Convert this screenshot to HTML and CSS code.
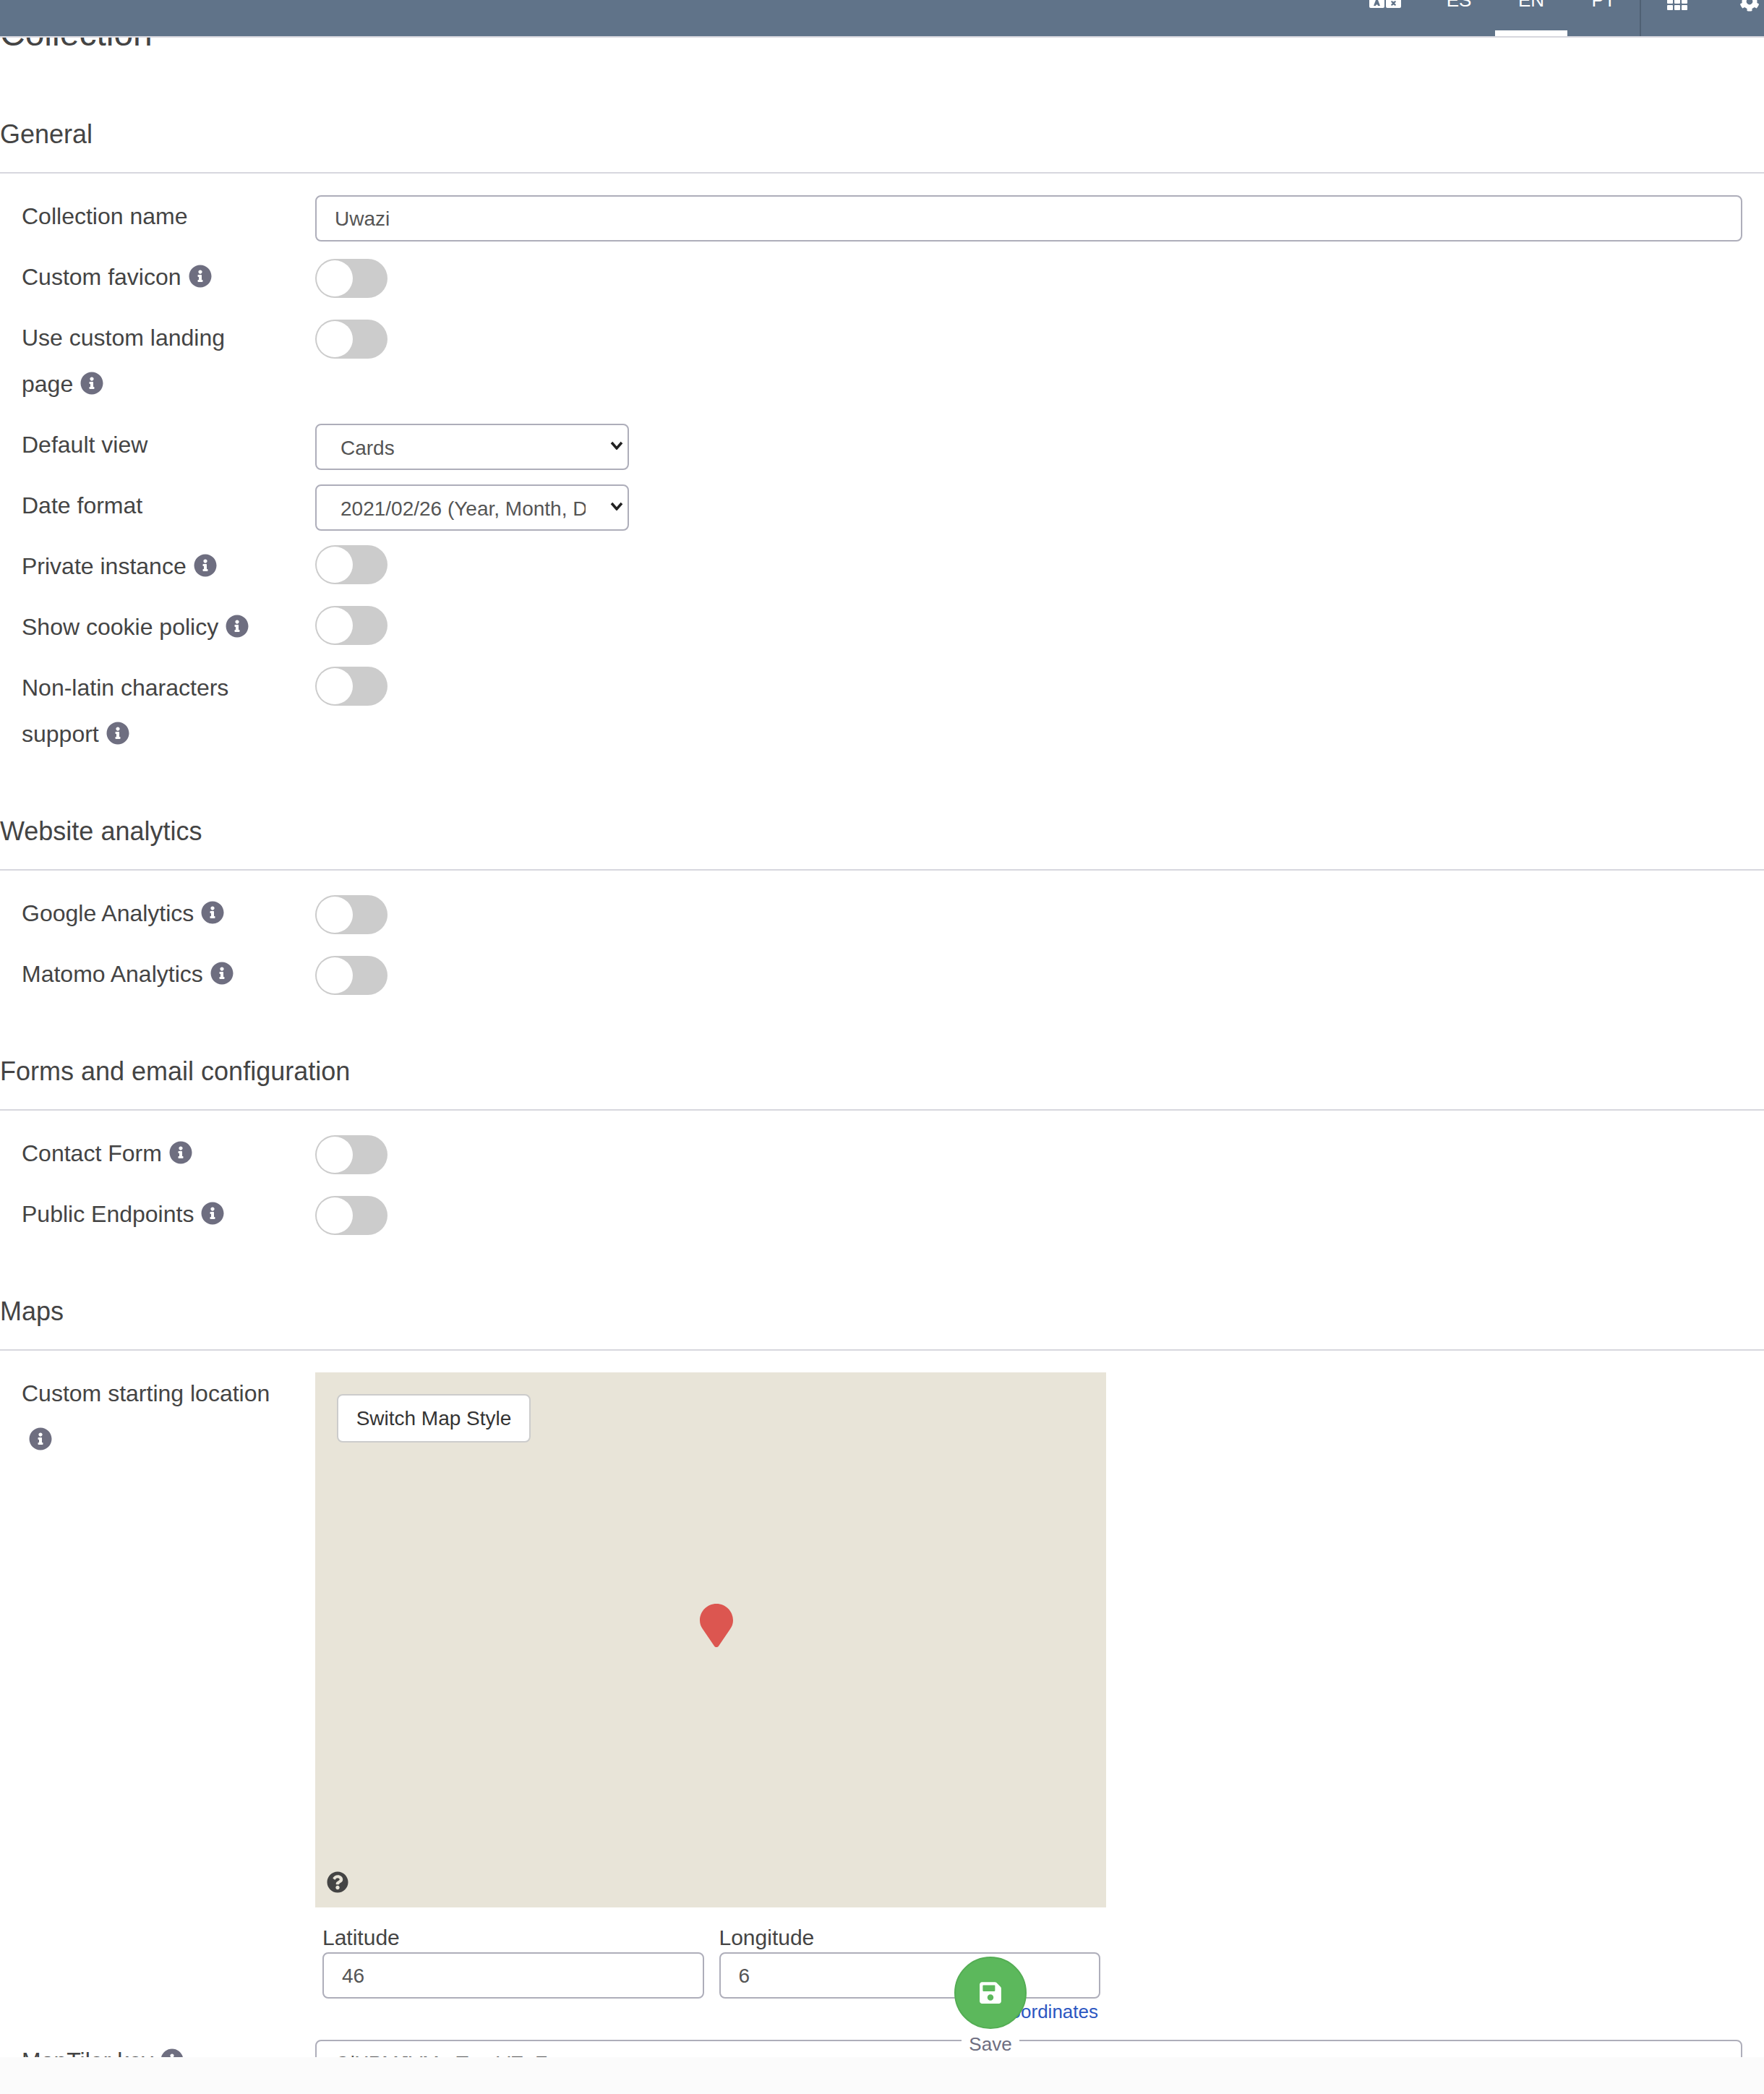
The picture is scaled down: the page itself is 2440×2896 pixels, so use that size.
FILE: index.html
```html
<!DOCTYPE html>
<html>
<head>
    <title>Collection settings</title>
    <link rel="stylesheet" href="styles.css">
</head>
<body>
    <svg class="icon-defs">
        <symbol id="info" viewBox="0 0 512 512"><path d="M256 8C119.043 8 8 119.083 8 256c0 136.997 111.043 248 248 248s248-111.003 248-248C504 119.083 392.957 8 256 8zm0 110c23.196 0 42 18.804 42 42s-18.804 42-42 42-42-18.804-42-42 18.804-42 42-42zm56 254c0 6.627-5.373 12-12 12h-88c-6.627 0-12-5.373-12-12v-24c0-6.627 5.373-12 12-12h12v-64h-12c-6.627 0-12-5.373-12-12v-24c0-6.627 5.373-12 12-12h64c6.627 0 12 5.373 12 12v100h12c6.627 0 12 5.373 12 12v24z"/></symbol>
        <symbol id="chevron" viewBox="0 0 18 12"><path d="M2 2l7 8 7-8" fill="none" stroke="#222" stroke-width="3.500"/></symbol>
    </svg>

    <nav class="navbar">
        <svg class="nav-language" viewBox="0 0 44 11">
            <path fill-rule="evenodd" d="M0 -10h21v19a2 2 0 0 1-2 2H2a2 2 0 0 1-2-2zM9 0h3l3 8h-3l-.5-1.500h-2L9 8H6z"/>
            <path fill-rule="evenodd" d="M23 -10h21v19a2 2 0 0 1-2 2H25a2 2 0 0 1-2-2zM31 1l2.500 1.500L36 1l1 1.500-2 2 2 2-1 1.500-2.500-1.500L31 8l-1-1.500 2-2-2-2z"/>
        </svg>
        <a class="nav-tab">ES</a>
        <a class="nav-tab active">EN</a>
        <a class="nav-tab">PT</a>
        <div class="nav-tools">
            <svg class="nav-grid" viewBox="0 0 28 14">
                <rect x="0" y="-3" width="8" height="8" rx="1"/>
                <rect x="10" y="-3" width="8" height="8" rx="1"/>
                <rect x="20" y="-3" width="8" height="8" rx="1"/>
                <rect x="0" y="7" width="8" height="7" rx="1"/>
                <rect x="10" y="7" width="8" height="7" rx="1"/>
                <rect x="20" y="7" width="8" height="7" rx="1"/>
            </svg>
            <svg class="nav-cog" viewBox="0 219 512 293"><path d="M487.4 315.7l-42.6-24.6c4.3-23.2 4.3-47 0-70.2l42.6-24.6c4.900-2.800 7.100-8.600 5.500-14-11.100-35.600-30-67.800-54.700-94.600-3.800-4.100-10-5.100-14.800-2.300L380.800 110c-17.900-15.400-38.500-27.300-60.800-35.100V25.800c0-5.600-3.900-10.500-9.400-11.700-36.700-8.200-74.300-7.800-109.200 0-5.500 1.200-9.400 6.100-9.400 11.700V75c-22.200 7.900-42.800 19.800-60.800 35.100L88.700 85.500c-4.900-2.800-11-1.900-14.800 2.300-24.700 26.700-43.600 58.900-54.700 94.600-1.700 5.400.6 11.200 5.500 14L67.300 221c-4.300 23.200-4.300 47 0 70.200l-42.600 24.600c-4.900 2.800-7.100 8.600-5.500 14 11.100 35.600 30 67.800 54.700 94.600 3.800 4.100 10 5.100 14.800 2.300l42.600-24.600c17.900 15.400 38.500 27.300 60.800 35.100v49.200c0 5.600 3.900 10.500 9.400 11.700 36.700 8.200 74.300 7.800 109.200 0 5.500-1.200 9.400-6.100 9.400-11.700v-49.200c22.200-7.900 42.800-19.800 60.800-35.100l42.600 24.600c4.900 2.800 11 1.900 14.800-2.300 24.700-26.700 43.600-58.900 54.700-94.600 1.500-5.500-.7-11.300-5.600-14.100zM256 336c-44.100 0-80-35.900-80-80s35.900-80 80-80 80 35.900 80 80-35.900 80-80 80z"/></svg>
        </div>
    </nav>

    <main class="settings">
        <h1 class="settings-title">Collection</h1>

        <h2 class="section-title">General</h2>
        <div class="row text-row">
            <label>Collection name</label>
            <input class="field" type="text" value="Uwazi">
        </div>
        <div class="row">
            <label>Custom favicon<svg class="info"><use href="#info"/></svg></label>
            <div class="toggle"><span class="knob"></span></div>
        </div>
        <div class="row">
            <label>Use custom landing page<svg class="info"><use href="#info"/></svg></label>
            <div class="toggle"><span class="knob"></span></div>
        </div>
        <div class="row">
            <label>Default view</label>
            <div class="picker">
                <select class="field"><option>Cards</option></select>
                <svg class="picker-arrow"><use href="#chevron"/></svg>
            </div>
        </div>
        <div class="row">
            <label>Date format</label>
            <div class="picker">
                <select class="field"><option>2021/02/26 (Year, Month, Day)</option></select>
                <svg class="picker-arrow"><use href="#chevron"/></svg>
            </div>
        </div>
        <div class="row">
            <label>Private instance<svg class="info"><use href="#info"/></svg></label>
            <div class="toggle raised"><span class="knob"></span></div>
        </div>
        <div class="row">
            <label>Show cookie policy<svg class="info"><use href="#info"/></svg></label>
            <div class="toggle raised"><span class="knob"></span></div>
        </div>
        <div class="row">
            <label>Non-latin characters support<svg class="info"><use href="#info"/></svg></label>
            <div class="toggle raised"><span class="knob"></span></div>
        </div>

        <h2 class="section-title">Website analytics</h2>
        <div class="row">
            <label>Google Analytics<svg class="info"><use href="#info"/></svg></label>
            <div class="toggle"><span class="knob"></span></div>
        </div>
        <div class="row">
            <label>Matomo Analytics<svg class="info"><use href="#info"/></svg></label>
            <div class="toggle"><span class="knob"></span></div>
        </div>

        <h2 class="section-title">Forms and email configuration</h2>
        <div class="row">
            <label>Contact Form<svg class="info"><use href="#info"/></svg></label>
            <div class="toggle"><span class="knob"></span></div>
        </div>
        <div class="row">
            <label>Public Endpoints<svg class="info"><use href="#info"/></svg></label>
            <div class="toggle"><span class="knob"></span></div>
        </div>

        <h2 class="section-title">Maps</h2>
        <div class="row">
            <label>Custom starting location<svg class="info"><use href="#info"/></svg></label>
            <div class="map-block">
                <div class="map">
                    <button class="map-style" type="button">Switch Map Style</button>
                    <svg class="map-pin" viewBox="0 0 46 60"><path d="M23 0C10.300 0 0 10.300 0 23c0 4.700 1.500 8.500 4 12l16 23.500c1.500 2 4.500 2 6 0L42 35c2.500-3.500 4-7.300 4-12C46 10.300 35.700 0 23 0z"/></svg>
                    <svg class="map-help" viewBox="0 0 512 512"><path d="M504 256c0 136.997-111.043 248-248 248S8 392.997 8 256C8 119.083 119.043 8 256 8s248 111.083 248 248zM262.655 90c-54.497 0-89.255 22.957-116.549 63.758-3.536 5.286-2.353 12.415 2.715 16.258l34.699 26.310c5.205 3.947 12.621 3.008 16.665-2.122 17.864-22.658 30.113-35.797 57.303-35.797 20.429 0 45.698 13.148 45.698 32.958 0 14.976-12.363 22.667-32.534 33.976C247.128 238.528 216 254.941 216 296v4c0 6.627 5.373 12 12 12h56c6.627 0 12-5.373 12-12v-1.333c0-28.462 83.186-29.647 83.186-106.667 0-58.002-60.165-102-116.531-102zM256 338c-25.365 0-46 20.635-46 46 0 25.364 20.635 46 46 46s46-20.636 46-46c0-25.365-20.635-46-46-46z"/></svg>
                </div>
                <div class="coords">
                    <div class="coord">
                        <span class="coord-label">Latitude</span>
                        <input class="field" type="text" value="46">
                    </div>
                    <div class="coord">
                        <span class="coord-label">Longitude</span>
                        <input class="field" type="text" value="6">
                    </div>
                </div>
                <a class="clear-coords">coordinates</a>
            </div>
        </div>
        <div class="row">
            <label>MapTiler key<svg class="info"><use href="#info"/></svg></label>
            <input class="field" type="text" value="OiXPMJVMmTmoVEpFm">
        </div>
    </main>

    <div class="page-bottom"></div>

    <div class="save">
        <button class="save-button" type="button">
            <svg viewBox="0 0 448 512"><path d="M433.941 129.941l-83.882-83.882A48 48 0 0 0 316.118 32H48C21.490 32 0 53.490 0 80v352c0 26.510 21.490 48 48 48h352c26.510 0 48-21.490 48-48V163.882a48 48 0 0 0-14.059-33.941zM224 416c-35.346 0-64-28.654-64-64 0-35.346 28.654-64 64-64s64 28.654 64 64c0 35.346-28.654 64-64 64zm96-304.520V212c0 6.627-5.373 12-12 12H76c-6.627 0-12-5.373-12-12V108c0-6.627 5.373-12 12-12h228.520c3.183 0 6.235 1.264 8.485 3.515l3.480 3.480A11.996 11.996 0 0 1 320 111.480z"/></svg>
        </button>
        <span class="save-label">Save</span>
    </div>
</body>
</html>
```

FILE: styles.css
```css
* {
    box-sizing: border-box;
}
body {
    margin: 0;
    height: 2896px;
    overflow: hidden;
    position: relative;
    background: #fff;
    font-family: "Liberation Sans", Arial, sans-serif;
    font-size: 32px;
    color: #444;
}
.icon-defs {
    display: none;
}

.navbar {
    display: flex;
    align-items: flex-start;
    height: 52px;
    background: #607389;
    border-bottom: 2px solid #d7d7de;
    color: #fff;
    overflow: hidden;
    padding-left: 1894px;
}
.navbar svg {
    display: block;
    fill: #fff;
}
.nav-language {
    width: 44px;
    height: 11px;
    margin-right: 30px;
}
.nav-tab {
    width: 100px;
    height: 50px;
    margin-top: -10px;
    line-height: 20px;
    font-size: 26px;
    text-align: center;
}
.nav-tab.active {
    height: 60px;
    border-bottom: 8px solid #fff;
}
.nav-tools {
    display: flex;
    align-items: flex-start;
    height: 50px;
    padding-left: 36px;
    border-left: 2px solid #4f6073;
}
.nav-grid {
    width: 28px;
    height: 14px;
    margin-right: 72px;
}
.nav-cog {
    width: 28px;
    height: 16px;
}

.settings {
    height: 2793px;
    overflow: hidden;
}
.settings-title {
    margin: -30px 0 94px;
    font-size: 48px;
    font-weight: normal;
    line-height: 50px;
}
.section-title {
    margin: 83px 0 27px;
    padding-bottom: 32px;
    border-bottom: 2px solid #d7d7de;
    font-size: 36px;
    font-weight: normal;
    line-height: 40px;
}
.settings-title + .section-title {
    margin-top: 0;
}

.row {
    display: grid;
    grid-template-columns: 350px 1fr;
    column-gap: 56px;
    align-items: start;
    padding: 0 30px;
    margin-bottom: 20px;
}
.row label {
    line-height: 64px;
}
.text-row {
    margin-bottom: 17px;
}
.info {
    width: 32px;
    height: 32px;
    margin-left: 10px;
    vertical-align: -4px;
    fill: #6e6e80;
}
.field {
    display: block;
    width: 100%;
    height: 64px;
    margin-top: 3px;
    padding: 2px 25px 0;
    border: 2px solid #aeaeba;
    border-radius: 8px;
    background: #fff;
    font-family: inherit;
    font-size: 28px;
    color: #555;
}
.picker {
    position: relative;
    width: 434px;
    height: 64px;
}
.picker .field {
    appearance: none;
    padding: 2px 58px 0 33px;
}
.picker-arrow {
    position: absolute;
    right: 8px;
    top: 27px;
    width: 18px;
    height: 12px;
}
.toggle {
    display: flex;
    width: 100px;
    height: 54px;
    margin-top: 7px;
    padding: 2px;
    background: #ccc;
    border-radius: 27px;
}
.toggle.raised {
    margin-top: 3px;
}
.knob {
    width: 50px;
    height: 50px;
    background: #fff;
    border-radius: 50%;
}

.map-block {
    width: 1094px;
    margin-top: 3px;
    padding-bottom: 1px;
}
.map {
    position: relative;
    height: 740px;
    padding: 30px;
    background: #e8e4d8;
}
.map-style {
    width: 268px;
    height: 67px;
    padding-top: 2px;
    border: 2px solid #ccc;
    border-radius: 8px;
    background: #fff;
    font-family: inherit;
    font-size: 28px;
    color: #333;
}
.map-pin {
    position: absolute;
    left: 532px;
    top: 320px;
    width: 46px;
    height: 60px;
    fill: #dc5650;
}
.map-help {
    position: absolute;
    left: 16px;
    bottom: 20px;
    width: 30px;
    height: 30px;
    fill: #444;
}
.coords {
    display: grid;
    grid-template-columns: 1fr 1fr;
    column-gap: 21px;
    padding: 24px 8px 0 10px;
}
.coord-label {
    display: block;
    height: 38px;
    line-height: 36px;
    font-size: 30px;
    color: #444;
}
.coord .field {
    margin-top: 0;
}
.clear-coords {
    display: block;
    padding-right: 11px;
    margin-top: 3px;
    line-height: 30px;
    font-size: 26px;
    text-align: right;
    color: #2b56c1;
}

.page-bottom {
    height: 51px;
    background: #fbfbfb;
}

/* floating save button, stays over the form */
.save {
    position: absolute;
    left: 1320px;
    top: 2706px;
    display: flex;
    flex-direction: column;
    align-items: center;
    width: 100px;
}
.save-button {
    display: flex;
    align-items: center;
    justify-content: center;
    width: 100px;
    height: 100px;
    padding: 0;
    border: 2px solid #54ad54;
    border-radius: 50%;
    background: #5cb85c;
}
.save-button svg {
    width: 30px;
    height: 34px;
    fill: #fff;
}
.save-label {
    width: 80px;
    margin-top: 6px;
    background: #fff;
    line-height: 30px;
    font-size: 26px;
    text-align: center;
    color: #6e6e80;
}
```
